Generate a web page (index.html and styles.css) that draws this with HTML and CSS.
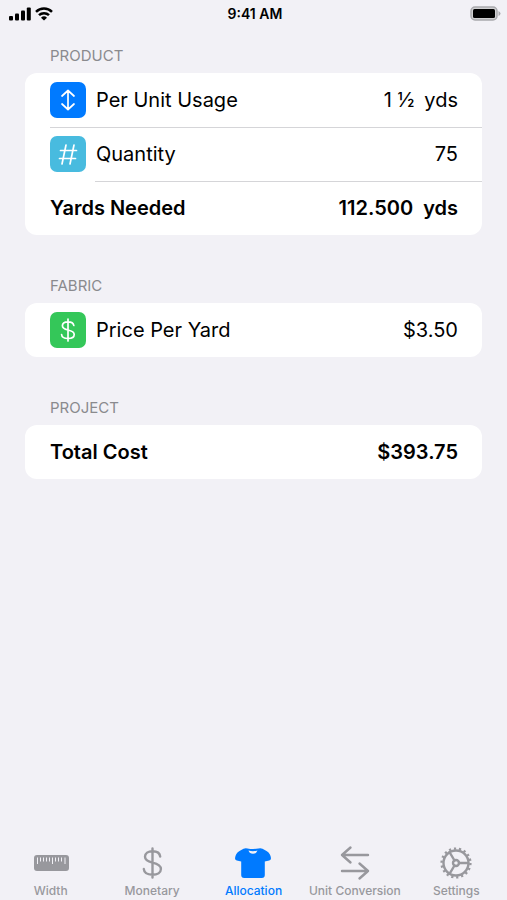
FILE: index.html
```html
<!DOCTYPE html>
<html lang="en">
<head>
<meta charset="utf-8">
<meta name="viewport" content="width=device-width, initial-scale=1">
<title>Allocation</title>
<link rel="stylesheet" href="styles.css">
</head>
<body>
<header class="status">
  <div class="signals">
    <svg width="22" height="14" viewBox="0 0 22 14" aria-hidden="true"><rect x="0" y="9" width="4" height="4.500" rx="1"/><rect x="6" y="6.500" width="4" height="7" rx="1"/><rect x="12" y="3.500" width="4" height="10" rx="1"/><rect x="17.800" y="0.500" width="4" height="13" rx="1"/></svg>
    <svg width="18" height="14" viewBox="0 0 18 14" aria-hidden="true"><g fill="none" stroke="#000" stroke-width="2.500"><path d="M1 4.800a11.500 11.500 0 0 1 16 0"/><path d="M4 8.200a7.200 7.200 0 0 1 10 0"/></g><path d="M9 13.500 6 10.700a4.300 4.300 0 0 1 6 0z"/></svg>
  </div>
  <time class="clock">9:41 AM</time>
  <svg class="battery" width="31" height="15" viewBox="0 0 31 15" aria-hidden="true"><rect x="1" y="1" width="26" height="13" rx="4" fill="#d0d0d2" stroke="#a9a9ad" stroke-width="1.500"/><rect x="3" y="3" width="22" height="9" rx="1.500"/><path d="M28.500 5q2 1 2 2.500t-2 2.500z" fill="#a9a9ad"/></svg>
</header>
<main class="content">
  <section>
    <h2>PRODUCT</h2>
    <div class="card">
      <div class="row">
        <span class="tile blue"><svg width="36" height="36" viewBox="0 0 36 36" aria-hidden="true"><path d="M18 9v18M12 14l6-5.500 6 5.500M12 22l6 5.500 6-5.500"/></svg></span>
        <label for="usage">Per Unit Usage</label>
        <input id="usage" type="text" value="1 ½"><span class="unit">yds</span>
      </div>
      <div class="row">
        <span class="tile cyan"><svg width="36" height="36" viewBox="0 0 36 36" aria-hidden="true"><path d="M16 9l-4 19M24 9l-4 19M10.500 14.500h16M9.500 22.500h16"/></svg></span>
        <label for="quantity">Quantity</label>
        <input id="quantity" type="text" value="75">
      </div>
      <div class="row total">
        <span class="name">Yards Needed</span>
        <output>112.500</output><span class="unit">yds</span>
      </div>
    </div>
  </section>
  <section>
    <h2>FABRIC</h2>
    <div class="card">
      <div class="row">
        <span class="tile green"><svg width="36" height="36" viewBox="0 0 36 36" aria-hidden="true"><path d="M18 7v22M23.800 13.500c-.3-2.300-2.500-3.700-5.800-3.700s-5.600 1.600-5.600 4 1.800 3.400 5.600 4.200c4.200.9 6.200 2 6.200 4.500s-2.500 4-6.200 4-6.200-1.500-6.400-4"/></svg></span>
        <label for="price">Price Per Yard</label>
        <input id="price" type="text" value="$3.50">
      </div>
    </div>
  </section>
  <section>
    <h2>PROJECT</h2>
    <div class="card">
      <div class="row total">
        <span class="name">Total Cost</span>
        <output>$393.75</output>
      </div>
    </div>
  </section>
</main>
<nav class="tabs">
  <a href="#width"><svg width="40" height="36" viewBox="0 0 40 36" aria-hidden="true"><rect x="3" y="10" width="35" height="16" rx="3" fill="currentColor"/><path d="M6.500 12.500v6.500M9.500 12.500v4M12.500 12.500v4M15.500 12.500v4M18.500 12.500v4M21.500 12.500v6.500M24.500 12.500v4M27.500 12.500v4M30.500 12.500v4M34 12.500v6.500" stroke="#f2f1f6" stroke-width="1"/></svg>Width</a>
  <a href="#monetary"><svg class="line" width="40" height="36" viewBox="0 0 40 36" aria-hidden="true"><path d="M20.500 3.500v29M28.200 11.500c-.4-3.300-3.300-5.300-7.700-5.300s-7.500 2.200-7.500 5.500c0 3.300 2.600 4.700 7.500 5.900 5.500 1.300 8.400 2.900 8.400 6.400s-3.400 5.700-8.400 5.700-8.400-2.200-8.700-5.700"/></svg>Monetary</a>
  <a class="active" href="#allocation" aria-current="page"><svg width="40" height="36" viewBox="0 0 40 36" aria-hidden="true"><path d="M14.500 3.500q5.500 1 11 0 2-.8 4 .3l4 2.200q4 2.300 4.500 7.300 0 2-1.800 2.300l-4.400.9V30q0 3-3 3H11.200q-3 0-3-3V16.500l-4.400-.9Q2 15.300 2 13.300 2.500 8.300 6.500 6l4-2.200q2-1.100 4-.3z" fill="currentColor"/><path d="M15.500 5.500q4.500 1.300 9 0-1 3.200-4.500 3.200t-4.500-3.200z" fill="#f2f1f6"/></svg>Allocation</a>
  <a href="#conversion"><svg class="line" width="40" height="36" viewBox="0 0 40 36" aria-hidden="true"><path d="M33 10H7M15.500 2.500 7 10l8.500 7.500M7 26h26M24.500 18.500 33 26l-8.500 7.500"/></svg>Unit Conversion</a>
  <a href="#settings"><svg class="line" width="40" height="36" viewBox="0 0 40 36" aria-hidden="true"><circle cx="20" cy="18" r="12.500"/><circle cx="20" cy="18" r="14.400" stroke-width="2.400" stroke-linecap="butt" stroke-dasharray="2.200 2.827"/><circle cx="20" cy="18" r="3"/><path d="M23 18h9M18.500 15.500l-5-8.300M18.500 20.500l-5 8.300"/></svg>Settings</a>
</nav>
</body>
</html>
```
FILE: styles.css
```css
* {
  box-sizing: border-box;
}

body {
  display: flex;
  flex-direction: column;
  min-height: 100vh;
  margin: 0;
  background: #f2f1f6;
  color: #000;
  font-family: Inter, "Liberation Sans", sans-serif;
  font-size: 20px;
}

svg {
  display: block;
}

.status {
  display: grid;
  grid-template-columns: 1fr auto 1fr;
  align-items: center;
  height: 27px;
  padding: 0 6px 0 9px;
}

.signals {
  display: flex;
  gap: 4px;
}

.clock {
  font-size: 14px;
  font-weight: 600;
}

.battery {
  justify-self: end;
}

.content {
  display: flex;
  flex: 1;
  flex-direction: column;
  gap: 39px;
  padding: 17px 25px;
}

h2 {
  margin: 0;
  padding: 0 25px 6px;
  color: #8a8a8e;
  font-size: 15px;
  font-weight: 400;
  line-height: 23px;
}

.card {
  overflow: hidden;
  border-radius: 12px;
  background: #fff;
}

.row {
  position: relative;
  display: flex;
  align-items: center;
  height: 54px;
  padding: 0 24px 0 25px;
}

.row + .row::before {
  position: absolute;
  top: 0;
  right: 0;
  left: 25px;
  height: 1px;
  background: #d5d5d8;
  content: "";
}

.row + .total::before {
  left: 70px;
}

.tile {
  margin-right: 10px;
  border-radius: 7px;
}

.tile path {
  fill: none;
  stroke: #fff;
  stroke-linecap: round;
  stroke-linejoin: round;
  stroke-width: 1.7;
}

.blue {
  background: #007aff;
}

.cyan {
  background: #48bbdf;
}

.green {
  background: #34c759;
}

label,
.name {
  white-space: nowrap;
}

input,
output {
  flex: 1;
  min-width: 0;
  padding: 0;
  border: 0;
  background: none;
  color: inherit;
  font: inherit;
  text-align: right;
}

.unit {
  margin-left: 10px;
}

.total {
  font-weight: 600;
}

.tabs {
  display: grid;
  grid-template-columns: repeat(5, minmax(0, 1fr));
  padding-bottom: 1px;
}

.tabs a {
  display: flex;
  flex-direction: column;
  align-items: center;
  gap: 2px;
  color: #98989d;
  font-size: 12px;
  font-weight: 500;
  line-height: 16px;
  text-decoration: none;
  white-space: nowrap;
}

.tabs .active {
  color: #007aff;
}

.line {
  fill: none;
  stroke: currentColor;
  stroke-linecap: round;
  stroke-linejoin: round;
  stroke-width: 2.4;
}
```
